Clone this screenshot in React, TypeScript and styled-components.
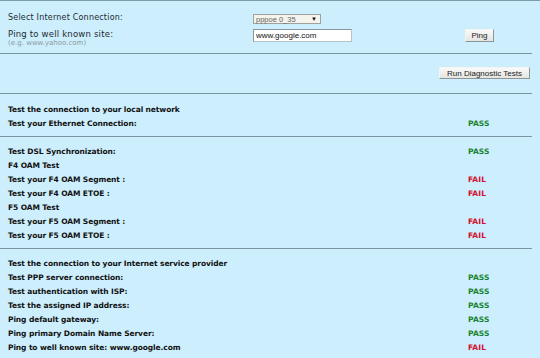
import { createGlobalStyle } from 'styled-components'
import styled from 'styled-components'

const GlobalStyle = createGlobalStyle`
  html, body {
    margin: 0;
    padding: 0;
    background: #cdeefc;
  }
  body {
    font-family: "DejaVu Sans", Verdana, sans-serif;
    color: #111;
  }
`;

const Page = styled.div`
  width: 540px;
  height: 358px;
  overflow: hidden;
  background: #cdeefc;
  border-top: 1px solid #7f9aa8;
`;

const Rule = styled.div<{ $top?: number; $bottom?: number }>`
  width: 532px;
  height: 1px;
  background: #7a94a2;
  margin-top: ${(p) => p.$top ?? 6}px;
  margin-bottom: ${(p) => p.$bottom ?? 7}px;
`;

const Form = styled.div`
  padding: 12px 0 0 8px;
  display: flex;
  flex-direction: column;
`;

const FormRow = styled.div<{ $h: number }>`
  display: grid;
  grid-template-columns: 245px 212px auto;
  align-items: start;
  height: ${(p) => p.$h}px;
`;

const Label = styled.div<{ $size?: number }>`
  font-size: ${(p) => p.$size ?? 8}px;
  line-height: 10px;
  color: #1c2a30;
  letter-spacing: 0.2px;
`;

const Hint = styled.div`
  font-size: 7px;
  line-height: 8px;
  color: #8a9aa2;
`;

const Select = styled.div`
  width: 68px;
  height: 10px;
  margin-top: 1px;
  display: flex;
  align-items: center;
  justify-content: space-between;
  box-sizing: border-box;
  padding: 0 3px 0 2px;
  background: #f4f3ec;
  border: 1px solid #a0a0a0;
  font-family: "Liberation Sans", Arial, sans-serif;
  font-size: 7.5px;
  color: #666;
`;

const Arrow = styled.span`
  font-size: 6px;
  color: #111;
`;

const Input = styled.div`
  width: 99px;
  height: 13px;
  box-sizing: border-box;
  padding: 1px 2px 0;
  background: #fff;
  border: 1px solid #b6c2c8;
  border-top-color: #8a969c;
  border-left-color: #8a969c;
  font-family: "Liberation Sans", Arial, sans-serif;
  font-size: 8px;
  line-height: 10px;
  color: #111;
`;

const Button = styled.div`
  display: inline-flex;
  align-items: center;
  justify-content: center;
  box-sizing: border-box;
  padding: 0 4px;
  background: linear-gradient(#fafafa, #e4e4e0);
  border: 1px solid #f4f4f4;
  border-right-color: #8e9498;
  border-bottom-color: #8e9498;
  font-family: "Liberation Sans", Arial, sans-serif;
  font-size: 8px;
  color: #222;
`;

const PingButton = styled(Button)`
  width: 29px;
  height: 13px;
`;

const ActionBar = styled.div`
  display: flex;
  justify-content: flex-end;
  width: 530px;
  padding: 13px 0 14px;
`;

const RunButton = styled(Button)`
  width: 91px;
  height: 12px;
`;

const Section = styled.div`
  padding-left: 8px;
  display: flex;
  flex-direction: column;
`;

const Row = styled.div`
  display: grid;
  grid-template-columns: 460px auto;
  height: 14px;
  align-items: center;
  font-size: 7.5px;
  font-weight: bold;
  letter-spacing: -0.1px;
  color: #111;
`;

const Status = styled.span<{ $pass: boolean }>`
  color: ${(p) => (p.$pass ? '#16822e' : '#d4102c')};
  font-weight: bold;
  letter-spacing: 0.1px;
`;

type Item = { label: string; status?: 'PASS' | 'FAIL' };

const local: Item[] = [
  { label: 'Test the connection to your local network' },
  { label: 'Test your Ethernet Connection:', status: 'PASS' },
];

const dsl: Item[] = [
  { label: 'Test DSL Synchronization:', status: 'PASS' },
  { label: 'F4 OAM Test' },
  { label: 'Test your F4 OAM Segment :', status: 'FAIL' },
  { label: 'Test your F4 OAM ETOE :', status: 'FAIL' },
  { label: 'F5 OAM Test' },
  { label: 'Test your F5 OAM Segment :', status: 'FAIL' },
  { label: 'Test your F5 OAM ETOE :', status: 'FAIL' },
];

const isp: Item[] = [
  { label: 'Test the connection to your Internet service provider' },
  { label: 'Test PPP server connection:', status: 'PASS' },
  { label: 'Test authentication with ISP:', status: 'PASS' },
  { label: 'Test the assigned IP address:', status: 'PASS' },
  { label: 'Ping default gateway:', status: 'PASS' },
  { label: 'Ping primary Domain Name Server:', status: 'PASS' },
  { label: 'Ping to well known site: www.google.com', status: 'FAIL' },
];

function Results({ items }: { items: Item[] }) {
  return (
    <Section>
      {items.map((it) => (
        <Row key={it.label}>
          <span>{it.label}</span>
          {it.status && <Status $pass={it.status === 'PASS'}>{it.status}</Status>}
        </Row>
      ))}
    </Section>
  );
}

export default function App() {
  return (
    <Page>
      <GlobalStyle />
      <Form>
        <FormRow $h={16}>
          <Label>Select Internet Connection:</Label>
          <Select>
            <span>pppoe 0_35</span>
            <Arrow>▼</Arrow>
          </Select>
          <span />
        </FormRow>
        <FormRow $h={24}>
          <div>
            <Label $size={8.5}>Ping to well known site:</Label>
            <Hint>(e.g. www.yahoo.com)</Hint>
          </div>
          <Input>www.google.com</Input>
          <PingButton>Ping</PingButton>
        </FormRow>
      </Form>
      <Rule $top={0} $bottom={0} />
      <ActionBar>
        <RunButton>Run Diagnostic Tests</RunButton>
      </ActionBar>
      <Rule $top={0} $bottom={8} />
      <Results items={local} />
      <Rule />
      <Results items={dsl} />
      <Rule />
      <Results items={isp} />
    </Page>
  );
}
